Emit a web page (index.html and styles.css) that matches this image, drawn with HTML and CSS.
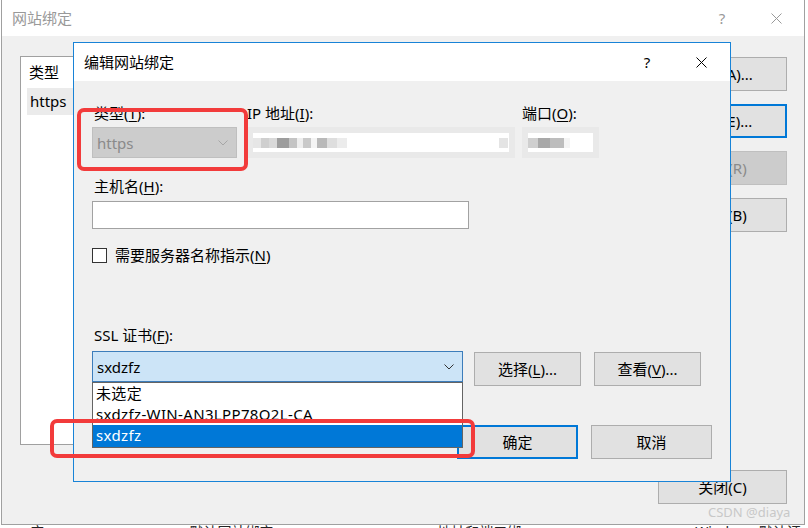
FILE: index.html
```html
<!DOCTYPE html>
<html lang="zh-CN">

<head>
    <meta charset="UTF-8">
    <meta name="viewport" content="width=device-width, initial-scale=1.0">
    <title>编辑网站绑定</title>
    <link rel="stylesheet" href="styles.css">
</head>

<body>
    <!-- 后面的窗口：网站绑定 -->
    <div class="outer">
        <div class="titlebar">
            <span class="title">网站绑定</span>
            <span class="tb-btn help">?</span>
            <span class="tb-btn">
                <svg width="11" height="11" viewBox="0 0 11 11"><path d="M0.5 0.5L10.5 10.5M10.5 0.5L0.5 10.5" stroke="currentColor" fill="none"/></svg>
            </span>
        </div>
        <div class="outer-body">
            <div class="listbox">
                <div class="lb-head">类型</div>
                <div class="lb-row">https</div>
            </div>
            <div class="btn-col">
                <button class="btn">添加(A)...</button>
                <button class="btn focus">编辑(E)...</button>
                <button class="btn" disabled>删除(R)</button>
                <button class="btn">浏览(B)</button>
            </div>
            <button class="btn close-btn">关闭(C)</button>
        </div>
    </div>
    <div class="under">
        <span class="u1">应用</span>
        <span class="u2">默认网站绑定名称设置</span>
        <span class="u3">地址和端口绑定信息</span>
        <span class="u4">Windows 默认证书管理器</span>
    </div>
    <div class="watermark">CSDN @diaya</div>

    <!-- 前面的窗口：编辑网站绑定 -->
    <div class="dialog">
        <div class="titlebar">
            <span class="title">编辑网站绑定</span>
            <span class="tb-btn help">?</span>
            <span class="tb-btn">
                <svg width="11" height="11" viewBox="0 0 11 11"><path d="M0.5 0.5L10.5 10.5M10.5 0.5L0.5 10.5" stroke="currentColor" fill="none"/></svg>
            </span>
        </div>
        <div class="dlg-body">
            <div class="fields">
                <div class="f-type">
                    <div class="label">类型(<u>T</u>):</div>
                    <div class="select disabled">
                        <span>https</span>
                        <svg width="10" height="6" viewBox="0 0 10 6"><polyline points="0.5,0.5 5,5 9.5,0.5" fill="none" stroke="#a6a6a6"/></svg>
                    </div>
                </div>
                <div class="f-ip">
                    <div class="label">IP 地址(<u>I</u>):</div>
                    <div class="input blur">
                        <div class="px px-ip"></div>
                    </div>
                </div>
                <div class="f-port">
                    <div class="label">端口(<u>O</u>):</div>
                    <div class="input blur">
                        <div class="px px-port"></div>
                    </div>
                </div>
            </div>

            <div class="label host-label">主机名(<u>H</u>):</div>
            <div class="input host"></div>

            <label class="check-row">
                <span class="checkbox"></span>
                <span>需要服务器名称指示(<u>N</u>)</span>
            </label>

            <div class="label ssl-label">SSL 证书(<u>F</u>):</div>
            <div class="ssl-row">
                <div class="select open">
                    <span>sxdzfz</span>
                    <svg width="10" height="6" viewBox="0 0 10 6"><polyline points="0.5,0.5 5,5 9.5,0.5" fill="none" stroke="#333"/></svg>
                </div>
                <button class="btn small">选择(<u>L</u>)...</button>
                <button class="btn small">查看(<u>V</u>)...</button>
            </div>

            <div class="actions">
                <button class="btn wide focus">确定</button>
                <button class="btn wide">取消</button>
            </div>
        </div>

        <ul class="droplist">
            <li>未选定</li>
            <li>sxdzfz-WIN-AN3LPP78O2L-CA</li>
            <li class="picked">sxdzfz</li>
        </ul>
    </div>

    <!-- 红色标注框 -->
    <div class="mark mark-type"></div>
    <div class="mark mark-ssl"></div>
</body>

</html>
```

FILE: styles.css
```css
* {
    margin: 0;
    padding: 0;
    box-sizing: border-box;
}

body {
    position: relative;
    width: 808px;
    height: 528px;
    overflow: hidden;
    background: #fff;
    color: #000;
    font: 15px/20px "Noto Sans", "Noto Sans CJK SC", sans-serif;
}

button {
    font: inherit;
    color: inherit;
}

u {
    text-underline-offset: 2px;
}

/* 标题栏 */
.titlebar {
    display: flex;
    align-items: center;
    background: #fff;
}

.title {
    flex: 1;
}

.tb-btn {
    width: 46px;
    display: flex;
    justify-content: center;
    align-items: center;
}

.tb-btn.help {
    margin-right: 8px;
}

/* 后面的窗口 */
.outer {
    margin-left: 1px;
    width: 804px;
    height: 525px;
    border: 1px solid #a0a0a0;
    border-top: none;
    background: #f0f0f0;
}

.outer .titlebar {
    height: 36px;
    padding: 0 5px 0 10px;
    color: #999;
}

.outer-body {
    display: grid;
    grid-template-columns: 1fr 129px;
    grid-template-rows: 389px auto;
    column-gap: 17px;
    padding: 20px 17px 0 18px;
}

.listbox {
    background: #fff;
    border: 1px solid #a0a0a0;
}

.lb-head {
    height: 31px;
    line-height: 31px;
    padding-left: 8px;
}

.lb-row {
    margin-left: 6px;
    height: 27px;
    line-height: 27px;
    padding-left: 3px;
    background: #ebebeb;
}

.btn-col {
    display: flex;
    flex-direction: column;
    gap: 13px;
    margin-top: 1px;
}

.btn {
    height: 34px;
    display: flex;
    align-items: center;
    justify-content: center;
    background: #e1e1e1;
    border: 1px solid #adadad;
}

.btn.focus {
    border: 2px solid #0078d7;
}

.btn:disabled {
    background: #cccccc;
    border-color: #bfbfbf;
    color: #8a8a8a;
}

.close-btn {
    grid-column: 2;
    margin-top: 25px;
}

/* 窗口下面露出的一点文字 */
.under {
    display: flex;
    height: 3px;
    overflow: hidden;
    font-size: 14px;
    line-height: 14px;
    color: #222;
}

.u1 { margin-left: 30px; }
.u2 { margin-left: 140px; }
.u3 { margin-left: 150px; }
.u4 { margin-left: 170px; }

.watermark {
    position: absolute;
    left: 708px;
    top: 502px;
    font-size: 13px;
    color: #c8c8c8;
}

/* 编辑网站绑定 对话框 */
.dialog {
    position: absolute;
    left: 73px;
    top: 42px;
    width: 658px;
    height: 440px;
    border: 1px solid #1883d7;
    background: #f0f0f0;
}

.dialog .titlebar {
    height: 38px;
    padding: 0 6px 0 10px;
}

.dlg-body {
    padding: 22px 18px 0;
}

.fields {
    display: flex;
}

.f-type { width: 155px; }
.f-ip { width: 275px; }
.f-port { width: 77px; }

.label {
    height: 20px;
    margin-bottom: 4px;
    padding-left: 2px;
}

.f-ip .label,
.f-port .label {
    padding-left: 0;
}

.input {
    height: 31px;
    background: #fff;
    border: 1px solid #a2a2a2;
}

.select {
    height: 31px;
    display: flex;
    align-items: center;
    justify-content: space-between;
    padding: 0 8px 0 4px;
}

.select.disabled {
    width: 145px;
    background: #cccccc;
    border: 1px solid #bfbfbf;
    color: #8a8a8a;
}

.select.open {
    width: 371px;
    background: #cce4f7;
    border: 1px solid #3c7dbb;
}

/* 打了马赛克的地址 */
.input.blur {
    display: flex;
    align-items: center;
    border: none;
    box-shadow: inset 0 0 0 6px #e9e9e9;
}

.f-ip .input { width: 268px; }

.px {
    height: 10px;
    margin-left: 6px;
}

.px-ip {
    width: 255px;
    background: linear-gradient(to right,
        #e6e6e6 0 8px, #cfcfcf 8px 16px, #d9d9d9 16px 24px, #9d9d9d 24px 36px, #c4c4c4 36px 44px,
        #eeeeee 44px 50px, #c9c9c9 50px 58px, #f4f4f4 58px 64px, #b9b9b9 64px 74px, #dedede 74px 84px,
        #ececec 84px 94px, #fff 94px 246px, #e4e4e4 246px 255px);
}

.px-port {
    width: 64px;
    background: linear-gradient(to right,
        #cfcfcf 0 10px, #a8a8a8 10px 22px, #bdbdbd 22px 36px, #f4f4f4 36px 42px, #fff 42px 64px);
}

.host-label {
    margin-top: 18px;
    margin-bottom: 5px;
}

.input.host {
    width: 377px;
    height: 28px;
}

.check-row {
    display: flex;
    align-items: center;
    gap: 8px;
    height: 20px;
    margin-top: 16px;
}

.checkbox {
    width: 15px;
    height: 15px;
    background: #fff;
    border: 1px solid #333;
}

.ssl-label {
    margin-top: 60px;
    margin-bottom: 6px;
}

.ssl-row {
    display: flex;
    align-items: flex-start;
}

.btn.small {
    width: 107px;
    margin-top: 1px;
    margin-left: 11px;
}

.btn.small + .btn.small {
    margin-left: 13px;
}

.actions {
    display: flex;
    justify-content: flex-end;
    gap: 13px;
    margin-top: 39px;
}

.btn.wide {
    width: 121px;
}

/* 展开的下拉列表 */
.droplist {
    position: absolute;
    left: 18px;
    top: 339px;
    width: 371px;
    height: 66px;
    list-style: none;
    background: #fff;
    border: 1px solid #646464;
    letter-spacing: 0.35px;
}

.droplist li {
    height: 21px;
    line-height: 21px;
    padding-left: 3px;
}

.droplist .picked {
    height: 22px;
    background: #0078d7;
    color: #fff;
}

/* 红框 */
.mark {
    position: absolute;
    border: 4px solid #f23b3b;
    border-radius: 7px;
}

.mark-type {
    left: 77px;
    top: 108px;
    width: 171px;
    height: 63px;
}

.mark-ssl {
    left: 50px;
    top: 419px;
    width: 425px;
    height: 39px;
}
```
